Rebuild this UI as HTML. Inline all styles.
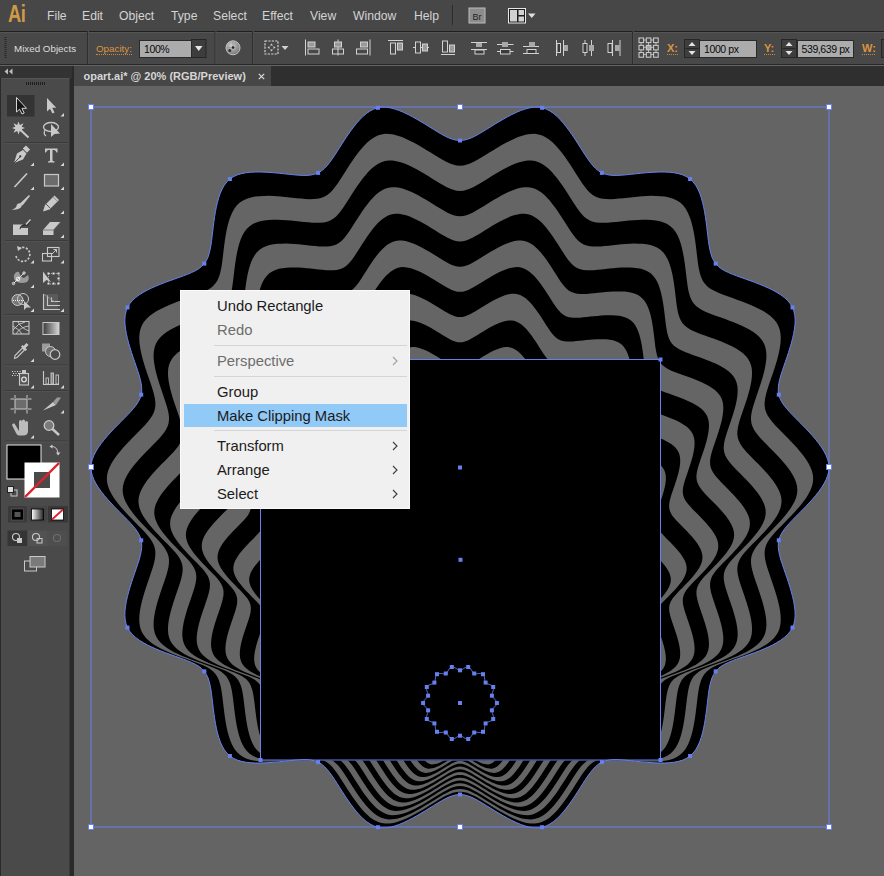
<!DOCTYPE html>
<html><head><meta charset="utf-8"><style>
*{margin:0;padding:0;box-sizing:border-box}
html,body{width:884px;height:876px;overflow:hidden;background:#646464;font-family:"Liberation Sans",sans-serif}
#menubar{position:absolute;left:0;top:0;width:884px;height:32px;background:#474747;border-bottom:1px solid #1f1f1f}
#menubar .m{position:absolute;top:9px;font-size:12.2px;color:#d4d4d4;line-height:15px}
#logo{position:absolute;left:8px;top:2px;font-size:23.5px;font-weight:bold;color:#d39a45;letter-spacing:-0.5px;line-height:24px;transform:scaleX(0.78);transform-origin:0 0}
#ctrl{position:absolute;left:0;top:32px;width:884px;height:33px;background:#484848;border-top:1px solid #555555;border-bottom:1px solid #282828}
.lbl{position:absolute;font-size:9.8px;color:#dedede;line-height:12px}
.org{color:#dc9440;font-weight:bold;font-size:11px}
.dots{position:absolute;height:1px;border-top:1px dotted #c88a40}
.inp{position:absolute;background:#acacac;border:1px solid #2a2a2a;font-size:10.5px;letter-spacing:-0.4px;color:#0a0a0a;line-height:16px;padding-left:4px;white-space:nowrap}
#tabrow{position:absolute;left:73px;top:66px;width:811px;height:20px;background:#2f2f2f}
#tab{position:absolute;left:74px;top:66px;width:196.5px;height:19.5px;background:#474747;font-size:11px;font-weight:bold;color:#d6d6d6;white-space:nowrap}
#canvas{position:absolute;left:74px;top:86px;width:810px;height:790px;background:#646464;overflow:hidden}
.art{position:absolute}
.cmenu{position:absolute;left:180px;top:290px;width:230px;height:219px;background:#f0f0f0;border:1px solid #fbfbfb}
.cmenu .hl{position:absolute;left:3px;top:113px;width:223px;height:23px;background:#91c9f7}
.cmenu .mi{position:absolute;left:36px;font-size:14.8px;color:#1b1b1b;line-height:20px;white-space:nowrap}
.cmenu .dis{color:#6d6d6d}
.cmenu .msep{position:absolute;left:33px;width:193px;height:1px;background:#d5d5d5}
.cmenu .chev{position:absolute;left:210.5px}
</style></head><body>
<div id="canvas"><svg class="art" style="left:-74px;top:-86px" width="884" height="876" viewBox="0 0 884 876"><defs><path id="ring" d="M0.00 -327.00 L3.67 -327.30 L7.37 -328.19 L11.10 -329.57 L14.88 -331.36 L18.73 -333.45 L22.64 -335.75 L26.62 -338.20 L30.67 -340.72 L34.78 -343.27 L38.96 -345.81 L43.21 -348.30 L47.51 -350.70 L51.85 -352.97 L56.24 -355.06 L60.64 -356.91 L65.05 -358.45 L69.43 -359.60 L73.76 -360.26 L78.00 -360.33 L82.11 -359.75 L86.07 -358.49 L89.85 -356.58 L93.47 -354.11 L96.92 -351.18 L100.22 -347.87 L103.39 -344.30 L106.43 -340.51 L109.36 -336.58 L112.19 -332.56 L114.94 -328.47 L117.60 -324.37 L120.20 -320.28 L122.76 -316.25 L125.28 -312.33 L127.81 -308.55 L130.36 -305.00 L133.00 -301.75 L135.76 -298.88 L138.70 -296.48 L141.88 -294.62 L145.32 -293.30 L149.03 -292.49 L153.00 -292.12 L157.18 -292.09 L161.55 -292.30 L166.07 -292.68 L170.72 -293.16 L175.46 -293.67 L180.28 -294.19 L185.15 -294.66 L190.05 -295.06 L194.97 -295.36 L199.87 -295.52 L204.72 -295.50 L209.49 -295.25 L214.13 -294.73 L218.58 -293.86 L222.77 -292.57 L226.62 -290.80 L230.07 -288.50 L233.08 -285.64 L235.67 -282.29 L237.85 -278.49 L239.69 -274.35 L241.23 -269.94 L242.53 -265.34 L243.63 -260.61 L244.57 -255.80 L245.37 -250.94 L246.07 -246.07 L246.69 -241.22 L247.26 -236.41 L247.82 -231.67 L248.39 -227.04 L249.03 -222.54 L249.79 -218.24 L250.75 -214.16 L252.00 -210.38 L253.61 -206.94 L255.66 -203.88 L258.19 -201.20 L261.18 -198.86 L264.59 -196.81 L268.35 -194.97 L272.38 -193.26 L276.62 -191.64 L281.01 -190.05 L285.50 -188.46 L290.07 -186.83 L294.66 -185.15 L299.25 -183.38 L303.81 -181.52 L308.29 -179.53 L312.66 -177.41 L316.85 -175.12 L320.80 -172.63 L324.44 -169.92 L327.65 -166.95 L330.35 -163.68 L332.46 -160.10 L333.94 -156.23 L334.81 -152.08 L335.13 -147.71 L334.99 -143.18 L334.47 -138.54 L333.64 -133.83 L332.58 -129.10 L331.34 -124.35 L329.95 -119.63 L328.47 -114.94 L326.92 -110.29 L325.35 -105.71 L323.79 -101.20 L322.30 -96.78 L320.92 -92.46 L319.74 -88.24 L318.84 -84.16 L318.32 -80.21 L318.28 -76.41 L318.80 -72.76 L319.92 -69.25 L321.60 -65.85 L323.78 -62.52 L326.36 -59.23 L329.26 -55.94 L332.37 -52.64 L335.64 -49.31 L339.00 -45.92 L342.40 -42.48 L345.81 -38.96 L349.18 -35.38 L352.48 -31.72 L355.66 -27.99 L358.67 -24.18 L361.45 -20.30 L363.94 -16.34 L366.03 -12.33 L367.64 -8.25 L368.65 -4.14 L369.00 -0.00 L368.65 4.14 L367.64 8.25 L366.03 12.33 L363.94 16.34 L361.45 20.30 L358.67 24.18 L355.66 27.99 L352.48 31.72 L349.18 35.38 L345.81 38.96 L342.40 42.48 L339.00 45.92 L335.64 49.31 L332.37 52.64 L329.26 55.94 L326.36 59.23 L323.78 62.52 L321.60 65.85 L319.92 69.25 L318.80 72.76 L318.28 76.41 L318.32 80.21 L318.84 84.16 L319.74 88.24 L320.92 92.46 L322.30 96.78 L323.79 101.20 L325.35 105.71 L326.92 110.29 L328.47 114.94 L329.95 119.63 L331.34 124.35 L332.58 129.10 L333.64 133.83 L334.47 138.54 L334.99 143.18 L335.13 147.71 L334.81 152.08 L333.94 156.23 L332.46 160.10 L330.35 163.68 L327.65 166.95 L324.44 169.92 L320.80 172.63 L316.85 175.12 L312.66 177.41 L308.29 179.53 L303.81 181.52 L299.25 183.38 L294.66 185.15 L290.07 186.83 L285.50 188.46 L281.01 190.05 L276.62 191.64 L272.38 193.26 L268.35 194.97 L264.59 196.81 L261.18 198.86 L258.19 201.20 L255.66 203.88 L253.61 206.94 L252.00 210.38 L250.75 214.16 L249.79 218.24 L249.03 222.54 L248.39 227.04 L247.82 231.67 L247.26 236.41 L246.69 241.22 L246.07 246.07 L245.37 250.94 L244.57 255.80 L243.63 260.61 L242.53 265.34 L241.23 269.94 L239.69 274.35 L237.85 278.49 L235.67 282.29 L233.08 285.64 L230.07 288.50 L226.62 290.80 L222.77 292.57 L218.58 293.86 L214.13 294.73 L209.49 295.25 L204.72 295.50 L199.87 295.52 L194.97 295.36 L190.05 295.06 L185.15 294.66 L180.28 294.19 L175.46 293.67 L170.72 293.16 L166.07 292.68 L161.55 292.30 L157.18 292.09 L153.00 292.12 L149.03 292.49 L145.32 293.30 L141.88 294.62 L138.70 296.48 L135.76 298.88 L133.00 301.75 L130.36 305.00 L127.81 308.55 L125.28 312.33 L122.76 316.25 L120.20 320.28 L117.60 324.37 L114.94 328.47 L112.19 332.56 L109.36 336.58 L106.43 340.51 L103.39 344.30 L100.22 347.87 L96.92 351.18 L93.47 354.11 L89.85 356.58 L86.07 358.49 L82.11 359.75 L78.00 360.33 L73.76 360.26 L69.43 359.60 L65.05 358.45 L60.64 356.91 L56.24 355.06 L51.85 352.97 L47.51 350.70 L43.21 348.30 L38.96 345.81 L34.78 343.27 L30.67 340.72 L26.62 338.20 L22.64 335.75 L18.73 333.45 L14.88 331.36 L11.10 329.57 L7.37 328.19 L3.67 327.30 L0.00 327.00 L-3.67 327.30 L-7.37 328.19 L-11.10 329.57 L-14.88 331.36 L-18.73 333.45 L-22.64 335.75 L-26.62 338.20 L-30.67 340.72 L-34.78 343.27 L-38.96 345.81 L-43.21 348.30 L-47.51 350.70 L-51.85 352.97 L-56.24 355.06 L-60.64 356.91 L-65.05 358.45 L-69.43 359.60 L-73.76 360.26 L-78.00 360.33 L-82.11 359.75 L-86.07 358.49 L-89.85 356.58 L-93.47 354.11 L-96.92 351.18 L-100.22 347.87 L-103.39 344.30 L-106.43 340.51 L-109.36 336.58 L-112.19 332.56 L-114.94 328.47 L-117.60 324.37 L-120.20 320.28 L-122.76 316.25 L-125.28 312.33 L-127.81 308.55 L-130.36 305.00 L-133.00 301.75 L-135.76 298.88 L-138.70 296.48 L-141.88 294.62 L-145.32 293.30 L-149.03 292.49 L-153.00 292.12 L-157.18 292.09 L-161.55 292.30 L-166.07 292.68 L-170.72 293.16 L-175.46 293.67 L-180.28 294.19 L-185.15 294.66 L-190.05 295.06 L-194.97 295.36 L-199.87 295.52 L-204.72 295.50 L-209.49 295.25 L-214.13 294.73 L-218.58 293.86 L-222.77 292.57 L-226.62 290.80 L-230.07 288.50 L-233.08 285.64 L-235.67 282.29 L-237.85 278.49 L-239.69 274.35 L-241.23 269.94 L-242.53 265.34 L-243.63 260.61 L-244.57 255.80 L-245.37 250.94 L-246.07 246.07 L-246.69 241.22 L-247.26 236.41 L-247.82 231.67 L-248.39 227.04 L-249.03 222.54 L-249.79 218.24 L-250.75 214.16 L-252.00 210.38 L-253.61 206.94 L-255.66 203.88 L-258.19 201.20 L-261.18 198.86 L-264.59 196.81 L-268.35 194.97 L-272.38 193.26 L-276.62 191.64 L-281.01 190.05 L-285.50 188.46 L-290.07 186.83 L-294.66 185.15 L-299.25 183.38 L-303.81 181.52 L-308.29 179.53 L-312.66 177.41 L-316.85 175.12 L-320.80 172.63 L-324.44 169.92 L-327.65 166.95 L-330.35 163.68 L-332.46 160.10 L-333.94 156.23 L-334.81 152.08 L-335.13 147.71 L-334.99 143.18 L-334.47 138.54 L-333.64 133.83 L-332.58 129.10 L-331.34 124.35 L-329.95 119.63 L-328.47 114.94 L-326.92 110.29 L-325.35 105.71 L-323.79 101.20 L-322.30 96.78 L-320.92 92.46 L-319.74 88.24 L-318.84 84.16 L-318.32 80.21 L-318.28 76.41 L-318.80 72.76 L-319.92 69.25 L-321.60 65.85 L-323.78 62.52 L-326.36 59.23 L-329.26 55.94 L-332.37 52.64 L-335.64 49.31 L-339.00 45.92 L-342.40 42.48 L-345.81 38.96 L-349.18 35.38 L-352.48 31.72 L-355.66 27.99 L-358.67 24.18 L-361.45 20.30 L-363.94 16.34 L-366.03 12.33 L-367.64 8.25 L-368.65 4.14 L-369.00 0.00 L-368.65 -4.14 L-367.64 -8.25 L-366.03 -12.33 L-363.94 -16.34 L-361.45 -20.30 L-358.67 -24.18 L-355.66 -27.99 L-352.48 -31.72 L-349.18 -35.38 L-345.81 -38.96 L-342.40 -42.48 L-339.00 -45.92 L-335.64 -49.31 L-332.37 -52.64 L-329.26 -55.94 L-326.36 -59.23 L-323.78 -62.52 L-321.60 -65.85 L-319.92 -69.25 L-318.80 -72.76 L-318.28 -76.41 L-318.32 -80.21 L-318.84 -84.16 L-319.74 -88.24 L-320.92 -92.46 L-322.30 -96.78 L-323.79 -101.20 L-325.35 -105.71 L-326.92 -110.29 L-328.47 -114.94 L-329.95 -119.63 L-331.34 -124.35 L-332.58 -129.10 L-333.64 -133.83 L-334.47 -138.54 L-334.99 -143.18 L-335.13 -147.71 L-334.81 -152.08 L-333.94 -156.23 L-332.46 -160.10 L-330.35 -163.68 L-327.65 -166.95 L-324.44 -169.92 L-320.80 -172.63 L-316.85 -175.12 L-312.66 -177.41 L-308.29 -179.53 L-303.81 -181.52 L-299.25 -183.38 L-294.66 -185.15 L-290.07 -186.83 L-285.50 -188.46 L-281.01 -190.05 L-276.62 -191.64 L-272.38 -193.26 L-268.35 -194.97 L-264.59 -196.81 L-261.18 -198.86 L-258.19 -201.20 L-255.66 -203.88 L-253.61 -206.94 L-252.00 -210.38 L-250.75 -214.16 L-249.79 -218.24 L-249.03 -222.54 L-248.39 -227.04 L-247.82 -231.67 L-247.26 -236.41 L-246.69 -241.22 L-246.07 -246.07 L-245.37 -250.94 L-244.57 -255.80 L-243.63 -260.61 L-242.53 -265.34 L-241.23 -269.94 L-239.69 -274.35 L-237.85 -278.49 L-235.67 -282.29 L-233.08 -285.64 L-230.07 -288.50 L-226.62 -290.80 L-222.77 -292.57 L-218.58 -293.86 L-214.13 -294.73 L-209.49 -295.25 L-204.72 -295.50 L-199.87 -295.52 L-194.97 -295.36 L-190.05 -295.06 L-185.15 -294.66 L-180.28 -294.19 L-175.46 -293.67 L-170.72 -293.16 L-166.07 -292.68 L-161.55 -292.30 L-157.18 -292.09 L-153.00 -292.12 L-149.03 -292.49 L-145.32 -293.30 L-141.88 -294.62 L-138.70 -296.48 L-135.76 -298.88 L-133.00 -301.75 L-130.36 -305.00 L-127.81 -308.55 L-125.28 -312.33 L-122.76 -316.25 L-120.20 -320.28 L-117.60 -324.37 L-114.94 -328.47 L-112.19 -332.56 L-109.36 -336.58 L-106.43 -340.51 L-103.39 -344.30 L-100.22 -347.87 L-96.92 -351.18 L-93.47 -354.11 L-89.85 -356.58 L-86.07 -358.49 L-82.11 -359.75 L-78.00 -360.33 L-73.76 -360.26 L-69.43 -359.60 L-65.05 -358.45 L-60.64 -356.91 L-56.24 -355.06 L-51.85 -352.97 L-47.51 -350.70 L-43.21 -348.30 L-38.96 -345.81 L-34.78 -343.27 L-30.67 -340.72 L-26.62 -338.20 L-22.64 -335.75 L-18.73 -333.45 L-14.88 -331.36 L-11.10 -329.57 L-7.37 -328.19 L-3.67 -327.30Z"/></defs>
<use href="#ring" transform="translate(460.00 467.50) scale(1.0000)" fill="#000"/><use href="#ring" transform="translate(460.00 478.71) scale(0.9571)" fill="#656565"/><use href="#ring" transform="translate(460.00 489.93) scale(0.9143)" fill="#000"/><use href="#ring" transform="translate(460.00 501.14) scale(0.8714)" fill="#656565"/><use href="#ring" transform="translate(460.00 512.36) scale(0.8286)" fill="#000"/><use href="#ring" transform="translate(460.00 523.57) scale(0.7857)" fill="#656565"/><use href="#ring" transform="translate(460.00 534.79) scale(0.7429)" fill="#000"/><use href="#ring" transform="translate(460.00 546.00) scale(0.7000)" fill="#656565"/><use href="#ring" transform="translate(460.00 557.21) scale(0.6571)" fill="#000"/><use href="#ring" transform="translate(460.00 568.43) scale(0.6143)" fill="#656565"/><use href="#ring" transform="translate(460.00 579.64) scale(0.5714)" fill="#000"/><use href="#ring" transform="translate(460.00 590.86) scale(0.5286)" fill="#656565"/><use href="#ring" transform="translate(460.00 602.07) scale(0.4857)" fill="#000"/><use href="#ring" transform="translate(460.00 613.29) scale(0.4429)" fill="#656565"/><use href="#ring" transform="translate(460.00 624.50) scale(0.4000)" fill="#000"/><use href="#ring" transform="translate(460.00 635.71) scale(0.3571)" fill="#656565"/><use href="#ring" transform="translate(460.00 646.93) scale(0.3143)" fill="#000"/><use href="#ring" transform="translate(460.00 658.14) scale(0.2714)" fill="#656565"/><use href="#ring" transform="translate(460.00 669.36) scale(0.2286)" fill="#000"/><use href="#ring" transform="translate(460.00 680.57) scale(0.1857)" fill="#656565"/><use href="#ring" transform="translate(460.00 691.79) scale(0.1429)" fill="#000"/><use href="#ring" transform="translate(460.00 703.00) scale(0.1000)" fill="#656565"/>
<rect x="260" y="359" width="401" height="401.5" fill="#000"/>
<use href="#ring" transform="translate(460 467.5)" fill="none" stroke="#6680f0" stroke-width="1"/><rect x="458.0" y="138.5" width="4" height="4" fill="#6680f0"/><rect x="540.1" y="105.8" width="4" height="4" fill="#6680f0"/><rect x="599.9" y="170.9" width="4" height="4" fill="#6680f0"/><rect x="688.1" y="177.0" width="4" height="4" fill="#6680f0"/><rect x="713.7" y="261.6" width="4" height="4" fill="#6680f0"/><rect x="790.5" y="305.4" width="4" height="4" fill="#6680f0"/><rect x="776.8" y="392.7" width="4" height="4" fill="#6680f0"/><rect x="827.0" y="465.5" width="4" height="4" fill="#6680f0"/><rect x="776.8" y="538.3" width="4" height="4" fill="#6680f0"/><rect x="790.5" y="625.6" width="4" height="4" fill="#6680f0"/><rect x="713.7" y="669.4" width="4" height="4" fill="#6680f0"/><rect x="688.1" y="754.0" width="4" height="4" fill="#6680f0"/><rect x="599.9" y="760.1" width="4" height="4" fill="#6680f0"/><rect x="540.1" y="825.2" width="4" height="4" fill="#6680f0"/><rect x="458.0" y="792.5" width="4" height="4" fill="#6680f0"/><rect x="375.9" y="825.2" width="4" height="4" fill="#6680f0"/><rect x="316.1" y="760.1" width="4" height="4" fill="#6680f0"/><rect x="227.9" y="754.0" width="4" height="4" fill="#6680f0"/><rect x="202.3" y="669.4" width="4" height="4" fill="#6680f0"/><rect x="125.5" y="625.6" width="4" height="4" fill="#6680f0"/><rect x="139.2" y="538.3" width="4" height="4" fill="#6680f0"/><rect x="89.0" y="465.5" width="4" height="4" fill="#6680f0"/><rect x="139.2" y="392.7" width="4" height="4" fill="#6680f0"/><rect x="125.5" y="305.4" width="4" height="4" fill="#6680f0"/><rect x="202.3" y="261.6" width="4" height="4" fill="#6680f0"/><rect x="227.9" y="177.0" width="4" height="4" fill="#6680f0"/><rect x="316.1" y="170.9" width="4" height="4" fill="#6680f0"/><rect x="375.9" y="105.8" width="4" height="4" fill="#6680f0"/><use href="#ring" transform="translate(460 703) scale(0.1)" fill="none" stroke="#6680f0" stroke-width="10.0"/><rect x="458.0" y="668.3" width="4" height="4" fill="#6680f0"/><rect x="466.2" y="665.0" width="4" height="4" fill="#6680f0"/><rect x="472.2" y="671.5" width="4" height="4" fill="#6680f0"/><rect x="481.0" y="672.2" width="4" height="4" fill="#6680f0"/><rect x="483.6" y="680.6" width="4" height="4" fill="#6680f0"/><rect x="491.2" y="685.0" width="4" height="4" fill="#6680f0"/><rect x="489.9" y="693.7" width="4" height="4" fill="#6680f0"/><rect x="494.9" y="701.0" width="4" height="4" fill="#6680f0"/><rect x="489.9" y="708.3" width="4" height="4" fill="#6680f0"/><rect x="491.2" y="717.0" width="4" height="4" fill="#6680f0"/><rect x="483.6" y="721.4" width="4" height="4" fill="#6680f0"/><rect x="481.0" y="729.8" width="4" height="4" fill="#6680f0"/><rect x="472.2" y="730.5" width="4" height="4" fill="#6680f0"/><rect x="466.2" y="737.0" width="4" height="4" fill="#6680f0"/><rect x="458.0" y="733.7" width="4" height="4" fill="#6680f0"/><rect x="449.8" y="737.0" width="4" height="4" fill="#6680f0"/><rect x="443.8" y="730.5" width="4" height="4" fill="#6680f0"/><rect x="435.0" y="729.8" width="4" height="4" fill="#6680f0"/><rect x="432.4" y="721.4" width="4" height="4" fill="#6680f0"/><rect x="424.8" y="717.0" width="4" height="4" fill="#6680f0"/><rect x="426.1" y="708.3" width="4" height="4" fill="#6680f0"/><rect x="421.1" y="701.0" width="4" height="4" fill="#6680f0"/><rect x="426.1" y="693.7" width="4" height="4" fill="#6680f0"/><rect x="424.8" y="685.0" width="4" height="4" fill="#6680f0"/><rect x="432.4" y="680.6" width="4" height="4" fill="#6680f0"/><rect x="435.0" y="672.2" width="4" height="4" fill="#6680f0"/><rect x="443.8" y="671.5" width="4" height="4" fill="#6680f0"/><rect x="449.8" y="665.0" width="4" height="4" fill="#6680f0"/><rect x="260.5" y="359.5" width="400.0" height="400.5" fill="none" stroke="#6680f0" stroke-width="1"/><rect x="258.5" y="357.5" width="4" height="4" fill="#6680f0"/><rect x="658.5" y="357.5" width="4" height="4" fill="#6680f0"/><rect x="258.5" y="758.0" width="4" height="4" fill="#6680f0"/><rect x="658.5" y="758.0" width="4" height="4" fill="#6680f0"/><rect x="458.5" y="557.8" width="4" height="4" fill="#6680f0"/><rect x="458.0" y="701.0" width="4" height="4" fill="#6680f0"/><rect x="458.0" y="465.5" width="4" height="4" fill="#6680f0"/><rect x="91" y="107" width="738" height="720" fill="none" stroke="#6680f0" stroke-width="1"/><rect x="88.5" y="104.5" width="5" height="5" fill="#fff" stroke="#6680f0" stroke-width="1"/><rect x="88.5" y="464.5" width="5" height="5" fill="#fff" stroke="#6680f0" stroke-width="1"/><rect x="88.5" y="824.5" width="5" height="5" fill="#fff" stroke="#6680f0" stroke-width="1"/><rect x="457.5" y="104.5" width="5" height="5" fill="#fff" stroke="#6680f0" stroke-width="1"/><rect x="457.5" y="824.5" width="5" height="5" fill="#fff" stroke="#6680f0" stroke-width="1"/><rect x="826.5" y="104.5" width="5" height="5" fill="#fff" stroke="#6680f0" stroke-width="1"/><rect x="826.5" y="464.5" width="5" height="5" fill="#fff" stroke="#6680f0" stroke-width="1"/><rect x="826.5" y="824.5" width="5" height="5" fill="#fff" stroke="#6680f0" stroke-width="1"/></svg></div>
<div id="menubar">
 <div id="logo">Ai</div>
 <div class="m" style="left:47px">File</div>
 <div class="m" style="left:82px">Edit</div>
 <div class="m" style="left:119px">Object</div>
 <div class="m" style="left:171px">Type</div>
 <div class="m" style="left:213px">Select</div>
 <div class="m" style="left:262px">Effect</div>
 <div class="m" style="left:310px">View</div>
 <div class="m" style="left:353px">Window</div>
 <div class="m" style="left:414px">Help</div>
 <svg style="position:absolute;left:0;top:0" width="884" height="30" viewBox="0 0 884 30">
  <rect x="452" y="5" width="1" height="20" fill="#2a2a2a"/><rect x="453" y="5" width="1" height="20" fill="#4a4a4a"/>
  <rect x="469" y="8" width="16" height="15" fill="#8c8c8c" stroke="#bdbdbd" stroke-width="1"/>
  <text x="477" y="19.5" font-family="Liberation Sans" font-size="9" fill="#1e1e1e" text-anchor="middle">Br</text>
  <rect x="508.5" y="8.5" width="17" height="14.5" fill="#1e1e1e" stroke="#e8e8e8" stroke-width="1"/>
  <rect x="510" y="10" width="7" height="11.5" fill="#d2d2d2"/><rect x="518.5" y="10" width="5.5" height="5" fill="#d2d2d2"/><rect x="518.5" y="16.5" width="5.5" height="5" fill="#d2d2d2"/>
  <path d="M528 13.5 H535.5 L531.75 18 Z" fill="#e0e0e0"/>
 </svg>
</div>
<div id="ctrl">
 <svg style="position:absolute;left:0;top:-33px" width="884" height="66" viewBox="0 0 884 66"><path d="M5.5 37 V59" stroke="#262626" stroke-width="2" stroke-dasharray="1 1"/><rect x="87" y="31" width="1" height="33" fill="#2e2e2e"/><rect x="88" y="31" width="1" height="33" fill="#4e4e4e"/><rect x="214.5" y="31" width="1" height="33" fill="#2e2e2e"/><rect x="215.5" y="31" width="1" height="33" fill="#4e4e4e"/><rect x="252" y="31" width="1" height="33" fill="#2e2e2e"/><rect x="253" y="31" width="1" height="33" fill="#4e4e4e"/><rect x="632" y="31" width="1" height="33" fill="#2e2e2e"/><rect x="633" y="31" width="1" height="33" fill="#4e4e4e"/><rect x="191.5" y="39.5" width="14.5" height="18" fill="#3d3d3d" stroke="#262626" stroke-width="1"/><path d="M195 46 H202.5 L198.75 51 Z" fill="#e6e6e6"/><defs><radialGradient id="gl" cx="0.4" cy="0.35" r="0.7"><stop offset="0" stop-color="#d0d0d0"/><stop offset="1" stop-color="#707070"/></radialGradient></defs><circle cx="233" cy="47.8" r="7" fill="url(#gl)" stroke="#c4c4c4" stroke-width="1"/><circle cx="233" cy="47.5" r="1.3" fill="#222"/><circle cx="229.8" cy="50.5" r="1.5" fill="#333"/><path d="M233 41 V46 M227 47.5 H231 M235 47.5 H239" stroke="#9a9a9a" stroke-width="0.8"/><rect x="265" y="41" width="13" height="13" fill="none" stroke="#d2d2d2" stroke-width="1.2" stroke-dasharray="2.2 1.2"/><path d="M271.5 43.5 L273 45.5 H270 Z M271.5 51.5 L273 49.5 H270 Z M267.5 47.5 L269.5 46 V49 Z M275.5 47.5 L273.5 46 V49 Z" fill="#d2d2d2"/><path d="M281.5 46 H288.5 L285 50 Z" fill="#d2d2d2"/><path d="M305.5 39.5 V55.5" stroke="#d2d2d2" stroke-width="1"/><rect x="308" y="42" width="7" height="5" fill="#9a9a9a" stroke="#d2d2d2" stroke-width="1"/><rect x="308" y="49" width="11" height="5" fill="none" stroke="#d2d2d2" stroke-width="1"/><path d="M338 39.5 V55.5" stroke="#d2d2d2" stroke-width="1"/><rect x="334.5" y="42" width="7" height="5" fill="#9a9a9a" stroke="#d2d2d2" stroke-width="1"/><rect x="332.5" y="49" width="11" height="5" fill="none" stroke="#d2d2d2" stroke-width="1"/><path d="M370 39.5 V55.5" stroke="#d2d2d2" stroke-width="1"/><rect x="360.5" y="42" width="7" height="5" fill="#9a9a9a" stroke="#d2d2d2" stroke-width="1"/><rect x="356.5" y="49" width="11" height="5" fill="none" stroke="#d2d2d2" stroke-width="1"/><path d="M388 40.5 H403" stroke="#d2d2d2" stroke-width="1"/><rect x="390.5" y="43" width="5" height="11" fill="none" stroke="#d2d2d2" stroke-width="1"/><rect x="397.5" y="43" width="5" height="7" fill="#9a9a9a" stroke="#d2d2d2" stroke-width="1"/><path d="M413 47.5 H429" stroke="#d2d2d2" stroke-width="1"/><rect x="415.5" y="42" width="5" height="11" fill="#484848" stroke="#d2d2d2" stroke-width="1"/><rect x="422.5" y="44" width="5" height="7" fill="#9a9a9a" stroke="#d2d2d2" stroke-width="1"/><path d="M441 54.5 H455" stroke="#d2d2d2" stroke-width="1"/><rect x="442.5" y="41" width="5" height="11" fill="none" stroke="#d2d2d2" stroke-width="1"/><rect x="449.5" y="45" width="5" height="7" fill="#9a9a9a" stroke="#d2d2d2" stroke-width="1"/><path d="M471 42.5 H487 M471 49.5 H487" stroke="#d2d2d2" stroke-width="1"/><rect x="476" y="43" width="6" height="4" fill="#a8a8a8"/><rect x="475" y="50" width="9" height="4" fill="#3a3a3a" stroke="#d2d2d2" stroke-width="1"/><path d="M497 44.5 H513.5 M497 51.5 H513.5" stroke="#d2d2d2" stroke-width="1"/><rect x="502" y="42" width="6" height="5" fill="#a8a8a8"/><rect x="500.5" y="49.5" width="9.5" height="4.5" fill="#3a3a3a" stroke="#d2d2d2" stroke-width="1"/><path d="M523 46.5 H539 M523 53.5 H539" stroke="#d2d2d2" stroke-width="1"/><rect x="529" y="42" width="6" height="4.5" fill="#a8a8a8"/><rect x="527" y="49.5" width="9" height="4" fill="#3a3a3a" stroke="#d2d2d2" stroke-width="1"/><path d="M556.5 40 V56 M563.5 40 V56" stroke="#d2d2d2" stroke-width="1"/><rect x="557" y="43.5" width="3.5" height="9" fill="#3a3a3a" stroke="#d2d2d2" stroke-width="1"/><rect x="564" y="45" width="4" height="6" fill="#a8a8a8"/><path d="M585 40 V56 M591.5 40 V56" stroke="#d2d2d2" stroke-width="1"/><rect x="583" y="43.5" width="4" height="9" fill="#3a3a3a" stroke="#d2d2d2" stroke-width="1"/><rect x="589" y="45" width="5" height="6" fill="#a8a8a8"/><path d="M612.5 40 V56 M620 40 V56" stroke="#d2d2d2" stroke-width="1"/><rect x="608" y="43.5" width="4" height="9" fill="#3a3a3a" stroke="#d2d2d2" stroke-width="1"/><rect x="615" y="45" width="4.5" height="6" fill="#a8a8a8"/><path d="M641 40 H656 M641 47.3 H656 M641 54.5 H656 M641 40 V54.5 M648.5 40 V54.5 M656 40 V54.5" stroke="#d2d2d2" stroke-width="0.8"/><rect x="639.0" y="38.0" width="4.6" height="4.6" fill="#484848" stroke="#d2d2d2" stroke-width="1"/><rect x="639.0" y="45.3" width="4.6" height="4.6" fill="#484848" stroke="#d2d2d2" stroke-width="1"/><rect x="639.0" y="52.6" width="4.6" height="4.6" fill="#484848" stroke="#d2d2d2" stroke-width="1"/><rect x="646.3" y="38.0" width="4.6" height="4.6" fill="#484848" stroke="#d2d2d2" stroke-width="1"/><rect x="646.3" y="45.3" width="4.6" height="4.6" fill="#a8a8a8" stroke="#d2d2d2" stroke-width="1"/><rect x="646.3" y="52.6" width="4.6" height="4.6" fill="#484848" stroke="#d2d2d2" stroke-width="1"/><rect x="653.6" y="38.0" width="4.6" height="4.6" fill="#484848" stroke="#d2d2d2" stroke-width="1"/><rect x="653.6" y="45.3" width="4.6" height="4.6" fill="#484848" stroke="#d2d2d2" stroke-width="1"/><rect x="653.6" y="52.6" width="4.6" height="4.6" fill="#484848" stroke="#d2d2d2" stroke-width="1"/><rect x="684.5" y="39.5" width="15" height="18" fill="#3e3e3e" stroke="#262626" stroke-width="1"/><path d="M685.5 48.5 H698.5" stroke="#262626" stroke-width="1"/><path d="M688.5 46 H695.5 L692.0 42 Z M688.5 51 H695.5 L692.0 55 Z" fill="#e4e4e4"/><rect x="781.5" y="39.5" width="15" height="18" fill="#3e3e3e" stroke="#262626" stroke-width="1"/><path d="M782.5 48.5 H795.5" stroke="#262626" stroke-width="1"/><path d="M785.5 46 H792.5 L789.0 42 Z M785.5 51 H792.5 L789.0 55 Z" fill="#e4e4e4"/><rect x="881.5" y="39.5" width="10" height="18" fill="#3e3e3e" stroke="#262626" stroke-width="1"/></svg>
 <div class="lbl" style="left:14px;top:10px">Mixed Objects</div>
 <div class="lbl" style="left:96px;top:10px;color:#dc9440">Opacity:</div><div class="dots" style="left:96px;top:20.5px;width:36px"></div>
 <div class="inp" style="left:139px;top:6.5px;width:53px;height:18px">100%</div>
 <div class="lbl org" style="left:667px;top:9px">X:</div><div class="dots" style="left:667px;top:20.5px;width:11px"></div>
 <div class="inp" style="left:699px;top:6.5px;width:58px;height:18px">1000 px</div>
 <div class="lbl org" style="left:764px;top:9px">Y:</div><div class="dots" style="left:764px;top:20.5px;width:11px"></div>
 <div class="inp" style="left:796.5px;top:6.5px;width:57.5px;height:18px">539,639 px</div>
 <div class="lbl org" style="left:862px;top:9px">W:</div><div class="dots" style="left:862px;top:20.5px;width:13px"></div>
</div>
<div id="tabrow"></div>
<svg style="position:absolute;left:0;top:0" width="74" height="876" viewBox="0 0 74 876"><rect x="0" y="66" width="74" height="810" fill="#2a2a2a"/><rect x="0" y="66" width="72" height="12" fill="#333333"/><path d="M8 68.5 L4.5 71.5 L8 74.5 Z M12.5 68.5 L9 71.5 L12.5 74.5Z" fill="#bdbdbd"/><rect x="1" y="78" width="68.5" height="798" fill="#4a4a4a"/><rect x="1" y="78" width="68.5" height="1" fill="#545454"/><rect x="26" y="82" width="1" height="3" fill="#1e1e1e"/><rect x="28" y="82" width="1" height="3" fill="#1e1e1e"/><rect x="30" y="82" width="1" height="3" fill="#1e1e1e"/><rect x="32" y="82" width="1" height="3" fill="#1e1e1e"/><rect x="34" y="82" width="1" height="3" fill="#1e1e1e"/><rect x="36" y="82" width="1" height="3" fill="#1e1e1e"/><rect x="38" y="82" width="1" height="3" fill="#1e1e1e"/><rect x="40" y="82" width="1" height="3" fill="#1e1e1e"/><rect x="42" y="82" width="1" height="3" fill="#1e1e1e"/><rect x="44" y="82" width="1" height="3" fill="#1e1e1e"/><rect x="5" y="142" width="63" height="1" fill="#3a3a3a"/><rect x="5" y="143" width="63" height="1" fill="#525252"/><rect x="5" y="240" width="63" height="1" fill="#3a3a3a"/><rect x="5" y="241" width="63" height="1" fill="#525252"/><rect x="5" y="314" width="63" height="1" fill="#3a3a3a"/><rect x="5" y="315" width="63" height="1" fill="#525252"/><rect x="5" y="364.5" width="63" height="1" fill="#3a3a3a"/><rect x="5" y="365.5" width="63" height="1" fill="#525252"/><rect x="5" y="390" width="63" height="1" fill="#3a3a3a"/><rect x="5" y="391" width="63" height="1" fill="#525252"/><rect x="5" y="440.5" width="63" height="1" fill="#3a3a3a"/><rect x="5" y="441.5" width="63" height="1" fill="#525252"/><rect x="7" y="95" width="27.5" height="21.5" fill="#333333"/><path d="M16.5 97.5 V112 L19.6 109.2 L22 114 L24.2 113 L21.9 108.3 L26.5 108.3 Z" fill="#151515" stroke="#d6d6d6" stroke-width="1"/><path d="M47 98 V111.5 L50 108.8 L52.4 113.5 L54.5 112.5 L52.2 107.8 L56.3 107.8 Z" fill="#c9c9c9"/><path d="M64 113.0 L64 116.5 L60.5 116.5 Z" fill="#d8d8d8"/><path d="M18.5 121.5 L19.8 125 L23.5 123.2 L21.7 126.8 L25 128 L21.7 129.2 L23.5 132.8 L19.8 131 L18.5 134.5 L17.2 131 L13.5 132.8 L15.3 129.2 L12 128 L15.3 126.8 L13.5 123.2 L17.2 125 Z" fill="#c9c9c9"/><path d="M20 129.5 L28.5 137.5" stroke="#c9c9c9" stroke-width="2"/><ellipse cx="51" cy="127" rx="7.5" ry="4.5" fill="none" stroke="#c9c9c9" stroke-width="1.3"/><path d="M45 130 q-2 4 1 6" fill="none" stroke="#c9c9c9" stroke-width="1.2"/><path d="M51 124 V137 L54.5 134 L60 133.5 Z" fill="#c9c9c9"/><path d="M14 163 L17 153.5 L23 150 L26.5 153.5 L23 159.5 Z" fill="#c9c9c9"/><path d="M22.8 148.5 L26 145.5 L30 149.5 L27 152.7 Z" fill="#c9c9c9"/><circle cx="20.3" cy="156.3" r="1.1" fill="#333"/><path d="M14 163 L20 157" stroke="#333" stroke-width="0.8"/><path d="M34 162.5 L34 166 L30.5 166 Z" fill="#d8d8d8"/><path d="M45 148.5 H57.5 V152.5 H56.5 Q56 150 54 150 H52.5 V160.8 L54.5 161.5 V162.5 H48 V161.5 L50 160.8 V150 H48.5 Q46.5 150 46 152.5 H45 Z" fill="#c9c9c9"/><path d="M64 162.5 L64 166 L60.5 166 Z" fill="#d8d8d8"/><path d="M14.5 187 L27 173.5" stroke="#c9c9c9" stroke-width="1.6"/><path d="M34 186.5 L34 190 L30.5 190 Z" fill="#d8d8d8"/><rect x="44.5" y="174.5" width="14" height="11.5" fill="#6c6c6c" stroke="#c9c9c9" stroke-width="1.2"/><path d="M64 186.5 L64 190 L60.5 190 Z" fill="#d8d8d8"/><path d="M20 203.5 L29 195 L30 196 L22.5 205.5 Z" fill="#c9c9c9"/><path d="M11.5 209.5 Q16 209 17 204.5 Q19.5 202 22 204.5 Q21.5 210.5 11.5 209.5 Z" fill="#c9c9c9"/><path d="M43 211.5 L45 205 L54.5 195.5 L59 200 L49.5 209.5 Z" fill="#c9c9c9"/><path d="M46 204 L50.5 208.5" stroke="#555" stroke-width="1"/><path d="M53.2 197 L57.7 201.5" stroke="#888" stroke-width="1"/><path d="M64 210.5 L64 214 L60.5 214 Z" fill="#d8d8d8"/><path d="M13 224.5 H24 L21 228 H28 V235 H13 Z" fill="#c9c9c9"/><path d="M20 229.5 Q23 224 27.5 226 L31 221 L30 219.5 L26 224.5 Q21 223.5 19.5 229 Z" fill="#2a2a2a"/><path d="M26 224.5 L30.5 219.5" stroke="#c9c9c9" stroke-width="1.6"/><path d="M43 230 L50 222 H60.5 L53.5 230 V235 H43 Z" fill="#c9c9c9"/><path d="M43 230 H53.5 L60.5 222" fill="none" stroke="#6a6a6a" stroke-width="0.8"/><path d="M64 234.5 L64 238 L60.5 238 Z" fill="#d8d8d8"/><path d="M16 256 A7 7 0 1 0 20 248" fill="none" stroke="#c9c9c9" stroke-width="1.6" stroke-dasharray="2.2 1.5"/><path d="M17 246 L22 248 L18 251 Z" fill="#c9c9c9"/><path d="M34 260.0 L34 263.5 L30.5 263.5 Z" fill="#d8d8d8"/><rect x="42.5" y="253.5" width="9" height="7.5" fill="none" stroke="#c9c9c9" stroke-width="1.1"/><rect x="47.5" y="247.5" width="11.5" height="9" fill="none" stroke="#c9c9c9" stroke-width="1.1"/><path d="M51 255 L56.5 249.5 M53.5 249.5 H56.5 V252.5" fill="none" stroke="#c9c9c9" stroke-width="1"/><path d="M64 260.0 L64 263.5 L60.5 263.5 Z" fill="#d8d8d8"/><path d="M14 275 Q16 271 19 272 Q20 277 24 278 L28 275 Q30 279 27 282 Q22 284 17 282 Q13 280 14 275 Z" fill="#9a9a9a"/><path d="M13.5 283.5 L24.5 272.5" stroke="#eee" stroke-width="0.9"/><circle cx="18" cy="279" r="1.8" fill="none" stroke="#eee" stroke-width="1"/><circle cx="13.5" cy="283.5" r="1.2" fill="none" stroke="#eee" stroke-width="0.9"/><circle cx="24" cy="273" r="1.2" fill="none" stroke="#eee" stroke-width="0.9"/><path d="M34 284.5 L34 288 L30.5 288 Z" fill="#d8d8d8"/><path d="M43 271.5 V283 L46.5 280 L51 282 Z" fill="#c9c9c9"/><rect x="48.5" y="273.5" width="10.5" height="10.5" fill="none" stroke="#c9c9c9" stroke-width="0.8" stroke-dasharray="1.2 1.2"/><path d="M47.5 272.5 h2 v2 h-2z M57.5 272.5 h2 v2 h-2z M47.5 282.5 h2 v2 h-2z M57.5 282.5 h2 v2 h-2z M52.5 272.5 h2 v2 h-2z M52.5 282.5 h2 v2 h-2z M57.5 277.5 h2 v2 h-2z" fill="#e0e0e0"/><circle cx="17.5" cy="300" r="5.5" fill="#777" stroke="#c9c9c9" stroke-width="1"/><circle cx="23" cy="299" r="5.5" fill="none" stroke="#c9c9c9" stroke-width="1"/><path d="M13 300.5 H24" stroke="#eee" stroke-width="1" stroke-dasharray="1 1"/><path d="M24 301 V310 L26.5 307.5 L31 307.5 Z" fill="#c9c9c9"/><path d="M34 308.5 L34 312 L30.5 312 Z" fill="#d8d8d8"/><rect x="43" y="294" width="15" height="15" fill="#5a5a5a"/><path d="M43.5 294 V309.5 H60 M47.5 295.5 V305.5 H60 M51.5 297.5 V301.5 H60" fill="none" stroke="#c9c9c9" stroke-width="1.1"/><path d="M43.5 294 L55 302" stroke="#999" stroke-width="0.8"/><path d="M64 308.5 L64 312 L60.5 312 Z" fill="#d8d8d8"/><rect x="13" y="321.5" width="16" height="12.5" fill="none" stroke="#c9c9c9" stroke-width="1.1"/><path d="M13 330 Q18 323 25 322 M16 334 Q20 327 29 326 M18 322 Q21 328 29 331 M13 326 Q20 330 22 334" fill="none" stroke="#c9c9c9" stroke-width="0.9"/><defs><linearGradient id="gr1" x1="0" y1="0" x2="1" y2="0"><stop offset="0" stop-color="#3a3a3a"/><stop offset="1" stop-color="#d8d8d8"/></linearGradient></defs><rect x="43" y="322.5" width="16" height="12" fill="url(#gr1)" stroke="#c9c9c9" stroke-width="1"/><path d="M14.5 358.5 L15 355.5 L22.5 348 L24.5 350 L17 357.5 Z" fill="none" stroke="#c9c9c9" stroke-width="1.1"/><path d="M21 346.5 L25.5 351 L27 349.5 L25.5 348 L28.5 345 L26.5 343 L23.5 346 L22.5 345 Z" fill="#c9c9c9"/><path d="M34 358.5 L34 362 L30.5 362 Z" fill="#d8d8d8"/><rect x="42" y="343.5" width="8" height="8" fill="#9c9c9c"/><circle cx="50.5" cy="351.5" r="5" fill="#6d6d6d" stroke="#c9c9c9" stroke-width="1"/><circle cx="55" cy="354.5" r="4.8" fill="#4a4a4a" stroke="#c9c9c9" stroke-width="1.2"/><path d="M12 371.5 h1 m1.5 0 h1 m1.5 0 h1 m1.5 0 h1 M13 373.5 h1 m1.5 0 h1 m1.5 0 h1 M12 375.5 h1 m1.5 0 h1 m1.5 0 h1" stroke="#ddd" stroke-width="1"/><rect x="22" y="370" width="4" height="3" fill="#c9c9c9"/><rect x="19.5" y="373.5" width="9" height="11.5" fill="#555" stroke="#c9c9c9" stroke-width="1.1"/><circle cx="24" cy="379.5" r="2.3" fill="none" stroke="#ddd" stroke-width="1.3"/><path d="M34 385.0 L34 388.5 L30.5 388.5 Z" fill="#d8d8d8"/><path d="M43.5 371 V384.5 H59" fill="none" stroke="#c9c9c9" stroke-width="1.1"/><rect x="46" y="378" width="2.5" height="6" fill="none" stroke="#c9c9c9" stroke-width="0.9"/><rect x="51" y="373" width="2.5" height="11" fill="#888" stroke="#c9c9c9" stroke-width="0.9"/><rect x="56" y="375" width="2.5" height="9" fill="none" stroke="#c9c9c9" stroke-width="0.9"/><path d="M64 385.0 L64 388.5 L60.5 388.5 Z" fill="#d8d8d8"/><rect x="15" y="399" width="12" height="10" fill="#6c6c6c" stroke="#c9c9c9" stroke-width="1"/><path d="M10.5 399 H14 M28 399 H31.5 M10.5 409 H14 M28 409 H31.5 M15 395 V398 M27 395 V398 M15 410 V413.5 M27 410 V413.5" stroke="#c9c9c9" stroke-width="1"/><path d="M43 410.5 L53 402 L56 405 Z" fill="#c9c9c9"/><path d="M53 402 L57 397.5 H61 L56 405 Z" fill="#999"/><path d="M64 410.0 L64 413.5 L60.5 413.5 Z" fill="#d8d8d8"/><path d="M14.5 423.5 L19 431 V422 Q19 420 20.5 420 Q22 420 22 422 V428 V421 Q22 419.5 23.5 419.5 Q25 419.5 25 421 V428 V422.5 Q25 421 26.5 421 Q28 421 28 422.5 V431 Q28 435.5 23 435.5 H19 Q17 435.5 15 431 L12 425 Q12 423 14.5 423.5 Z" fill="#bcbcbc"/><path d="M34 435.0 L34 438.5 L30.5 438.5 Z" fill="#d8d8d8"/><circle cx="49" cy="425.5" r="4.8" fill="#7a7a7a" stroke="#c9c9c9" stroke-width="1.3"/><path d="M52.5 429 L59 435" stroke="#c9c9c9" stroke-width="2.4"/><rect x="7" y="445" width="34" height="34" fill="#000" stroke="#e8e8e8" stroke-width="1"/><rect x="24.5" y="462.5" width="35" height="35" fill="#fff"/><rect x="34" y="472" width="16" height="16" fill="#4a4a4a"/><path d="M25 497 L59 463" stroke="#e0202a" stroke-width="2.4"/><path d="M51 446.5 Q57 446 58 453" fill="none" stroke="#c9c9c9" stroke-width="1"/><path d="M49.5 446.5 L52.5 444.5 V448.5 Z M56 452.5 L60.5 452.5 L58 455.5 Z" fill="#c9c9c9"/><rect x="11" y="490" width="6" height="6" fill="none" stroke="#c9c9c9" stroke-width="1"/><rect x="7.5" y="486.5" width="6" height="6" fill="#ddd" stroke="#222" stroke-width="1"/><rect x="8" y="506" width="19" height="16.5" fill="#3a3a3a"/><rect x="11.5" y="509" width="12" height="11" fill="#000" stroke="#666" stroke-width="0.6"/><rect x="14.5" y="512" width="6" height="5" fill="#555"/><defs><linearGradient id="gr2" x1="0" y1="0" x2="1" y2="0"><stop offset="0" stop-color="#fff"/><stop offset="1" stop-color="#222"/></linearGradient></defs><rect x="28.5" y="506" width="18.5" height="16.5" fill="#444"/><rect x="31.5" y="509" width="12" height="11" fill="url(#gr2)" stroke="#000" stroke-width="0.8"/><rect x="48" y="506" width="20" height="16.5" fill="#383838"/><rect x="51.5" y="509" width="12" height="11" fill="#fff" stroke="#000" stroke-width="0.8"/><path d="M52 519.5 L63 509.5" stroke="#e0202a" stroke-width="1.8"/><rect x="7.5" y="530.5" width="20" height="15.5" fill="#353535"/><rect x="27.5" y="530.5" width="19.5" height="15.5" fill="#525252"/><rect x="47" y="530.5" width="20" height="15.5" fill="#4e4e4e"/><circle cx="16" cy="537" r="3.5" fill="none" stroke="#c9c9c9" stroke-width="1.1"/><rect x="17" y="538" width="5" height="5" fill="#c9c9c9"/><circle cx="36" cy="537" r="3.5" fill="none" stroke="#c9c9c9" stroke-width="1.1"/><rect x="37" y="538.5" width="5" height="4.5" fill="none" stroke="#c9c9c9" stroke-width="1"/><circle cx="57" cy="538" r="3.5" fill="none" stroke="#6e6e6e" stroke-width="1.1"/><rect x="24.5" y="561" width="12" height="10" fill="none" stroke="#c9c9c9" stroke-width="1"/><rect x="30" y="556.5" width="15" height="10.5" fill="#7a7a7a" stroke="#c9c9c9" stroke-width="1"/></svg>
<div id="tab"><span style="position:absolute;left:9.5px;top:3.5px">opart.ai* @ 20% (RGB/Preview)</span><svg style="position:absolute;left:183.5px;top:6.5px" width="7" height="7" viewBox="0 0 7 7"><path d="M0.8 0.8 L6.2 6.2 M6.2 0.8 L0.8 6.2" stroke="#e0e0e0" stroke-width="1.1"/></svg></div>
<div class="cmenu"><div class="hl"></div><div class="mi" style="top:5px">Undo Rectangle</div><div class="mi dis" style="top:29px">Redo</div><div class="msep" style="top:53.5px"></div><div class="mi dis" style="top:60px">Perspective</div><svg class="chev" style="top:65px" width="6" height="10" viewBox="0 0 6 10"><path d="M1 1 L5 5 L1 9" fill="none" stroke="#a0a0a0" stroke-width="1.1"/></svg><div class="msep" style="top:84.5px"></div><div class="mi" style="top:91px">Group</div><div class="mi" style="top:115px">Make Clipping Mask</div><div class="msep" style="top:139.0px"></div><div class="mi" style="top:145px">Transform</div><svg class="chev" style="top:150px" width="6" height="10" viewBox="0 0 6 10"><path d="M1 1 L5 5 L1 9" fill="none" stroke="#3c3c3c" stroke-width="1.1"/></svg><div class="mi" style="top:169px">Arrange</div><svg class="chev" style="top:174px" width="6" height="10" viewBox="0 0 6 10"><path d="M1 1 L5 5 L1 9" fill="none" stroke="#3c3c3c" stroke-width="1.1"/></svg><div class="mi" style="top:193px">Select</div><svg class="chev" style="top:198px" width="6" height="10" viewBox="0 0 6 10"><path d="M1 1 L5 5 L1 9" fill="none" stroke="#3c3c3c" stroke-width="1.1"/></svg></div>
</body></html>
